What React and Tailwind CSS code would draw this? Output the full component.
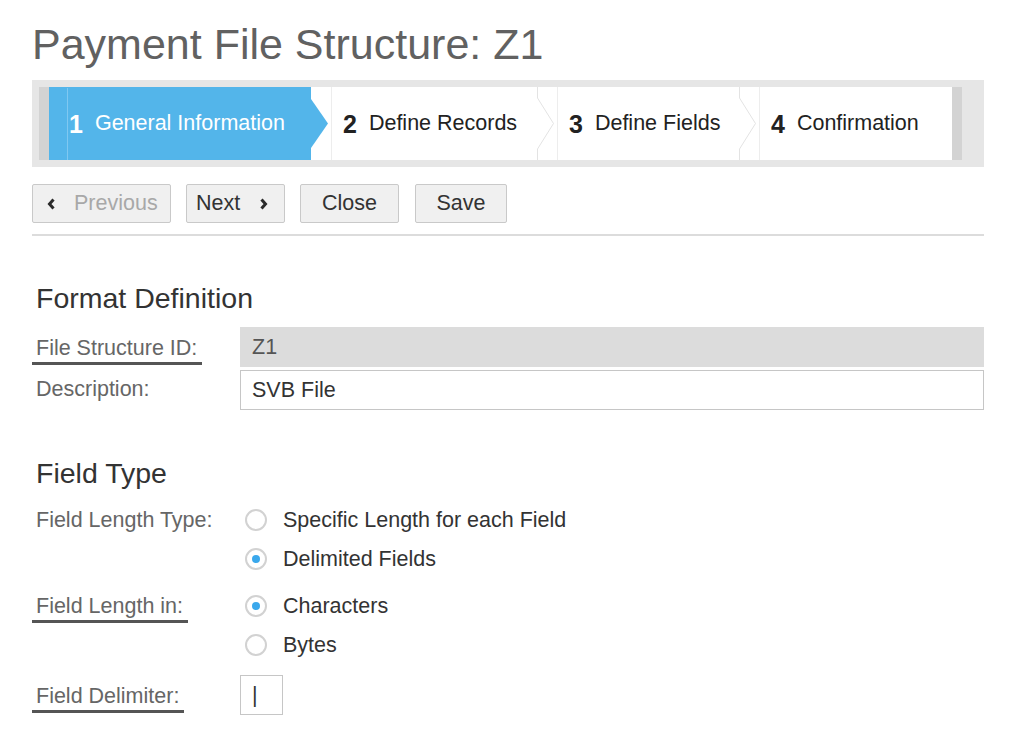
import React from "react";

function ChevronLeft() {
  return (
    <svg width="9" height="12" viewBox="0 0 9 12" className="shrink-0">
      <polyline points="6.5,1.5 2.5,6 6.5,10.5" fill="none" stroke="#2a2a2a" strokeWidth="3" strokeLinejoin="miter" />
    </svg>
  );
}

function ChevronRight() {
  return (
    <svg width="9" height="12" viewBox="0 0 9 12" className="shrink-0">
      <polyline points="2.5,1.5 6.5,6 2.5,10.5" fill="none" stroke="#2a2a2a" strokeWidth="3" strokeLinejoin="miter" />
    </svg>
  );
}

function Sep() {
  return (
    <svg width="21" height="73" viewBox="0 0 21 73" className="shrink-0">
      <polyline points="0.5,0 0.5,11 16.5,36.5 0.5,62 0.5,73" fill="none" stroke="#e3e3e3" strokeWidth="1" />
      <line x1="20.5" y1="0" x2="20.5" y2="73" stroke="#ededed" strokeWidth="1" />
    </svg>
  );
}

function Step({ n, label, className }) {
  return (
    <div className={"flex h-full items-center pl-[11px] pt-px text-[#222] " + className}>
      <span className="text-[25px] font-bold leading-none">{n}</span>
      <span className="ml-[12px] text-[21.5px] leading-none">{label}</span>
    </div>
  );
}

function Label({ children, underline }) {
  if (underline) {
    return (
      <span className="mt-[6px] inline-block border-b-[3px] border-[#555] pb-[2px] pl-[4px] pr-[5px] text-[21.5px] leading-[24px] text-[#666]">
        {children}
      </span>
    );
  }
  return <span className="inline-block pl-[4px] text-[21.5px] leading-[24px] text-[#666]">{children}</span>;
}

function Radio({ checked, label }) {
  return (
    <div className="flex h-[39px] items-center">
      <span className="ml-[5px] flex h-[22px] w-[22px] shrink-0 items-center justify-center rounded-full border-2 border-[#d2d2d2] bg-white">
        {checked && <span className="h-[8px] w-[8px] rounded-full bg-[#3aa8ec]" />}
      </span>
      <span className="ml-[16px] text-[21.5px] leading-[24px] text-[#333]">{label}</span>
    </div>
  );
}

export default function App() {
  return (
    <div className="min-h-[755px] bg-white pl-[32px] pt-[23px] font-['Liberation_Sans',Arial,sans-serif]">
      <div className="w-[952px]">
        <h1 className="whitespace-nowrap text-[43px] font-normal leading-[43px] text-[#616161]">
          Payment File Structure: Z1
        </h1>

        {/* Wizard */}
        <div className="mt-[14px] h-[87px] bg-[#e6e6e6] py-[7px] pl-[7px] pr-[22px]">
          <div className="flex h-[73px] bg-white">
            <div className="w-[10px] shrink-0 bg-[#d3d3d3]" />
            <div className="flex h-full w-[262px] shrink-0 items-center bg-[#53b5ea] pt-px text-white">
              <div className="ml-[18px] h-full w-px bg-[#7fc8f1]" />
              <span className="ml-px text-[25px] font-bold leading-none">1</span>
              <span className="ml-[12px] text-[21.5px] leading-none">General Information</span>
            </div>
            <svg width="21" height="73" viewBox="0 0 21 73" className="shrink-0">
              <polygon points="0,12 17,36.5 0,61" fill="#53b5ea" />
              <line x1="20.5" y1="0" x2="20.5" y2="73" stroke="#ededed" strokeWidth="1" />
            </svg>
            <Step n="2" label="Define Records" className="w-[205px] shrink-0" />
            <Sep />
            <Step n="3" label="Define Fields" className="w-[181px] shrink-0" />
            <Sep />
            <Step n="4" label="Confirmation" className="flex-1" />
            <div className="w-[10px] shrink-0 bg-[#d3d3d3]" />
          </div>
        </div>

        {/* Buttons */}
        <div className="mt-[17px] flex gap-[15px] text-[21.5px] leading-none">
          <button className="flex h-[39px] w-[139px] items-center rounded-[2px] border border-[#c9c9c9] bg-[#f0f0f0] pl-[14px] text-[#a8a8a8]">
            <ChevronLeft />
            <span className="ml-[18px]">Previous</span>
          </button>
          <button className="flex h-[39px] w-[99px] items-center rounded-[2px] border border-[#c9c9c9] bg-[#f0f0f0] pl-[9px] text-[#333]">
            <span>Next</span>
            <span className="ml-[19px]">
              <ChevronRight />
            </span>
          </button>
          <button className="flex h-[39px] w-[99px] items-center justify-center rounded-[2px] border border-[#c9c9c9] bg-[#f0f0f0] text-[#333]">
            Close
          </button>
          <button className="ml-px flex h-[39px] w-[92px] items-center justify-center rounded-[2px] border border-[#c9c9c9] bg-[#f0f0f0] text-[#333]">
            Save
          </button>
        </div>

        <div className="mt-[11px] h-[2px] bg-[#dcdcdc]" />

        {/* Format Definition */}
        <h2 className="mt-[45px] pl-[4px] text-[28.5px] font-normal leading-[34px] text-[#333]">Format Definition</h2>

        <div className="mt-[12px] flex h-[40px] items-center">
          <div className="w-[208px] shrink-0">
            <Label underline>File Structure ID:</Label>
          </div>
          <div className="flex h-full flex-1 items-center bg-[#dcdcdc] pl-[12px] text-[21.5px] text-[#555]">Z1</div>
        </div>
        <div className="mt-[3px] flex h-[40px] items-center">
          <div className="w-[208px] shrink-0">
            <Label>Description:</Label>
          </div>
          <div className="flex h-full flex-1 items-center border border-[#c6c6c6] bg-white pl-[11px] text-[21.5px] text-[#333]">
            SVB File
          </div>
        </div>

        {/* Field Type */}
        <h2 className="mt-[46px] pl-[4px] text-[28.5px] font-normal leading-[34px] text-[#333]">Field Type</h2>

        <div className="mt-[10px] flex">
          <div className="flex h-[39px] w-[208px] shrink-0 items-center">
            <Label>Field Length Type:</Label>
          </div>
          <div className="flex flex-col">
            <Radio label="Specific Length for each Field" />
            <Radio checked label="Delimited Fields" />
          </div>
        </div>

        <div className="mt-[8px] flex">
          <div className="flex h-[39px] w-[208px] shrink-0 items-center">
            <Label underline>Field Length in:</Label>
          </div>
          <div className="flex flex-col">
            <Radio checked label="Characters" />
            <Radio label="Bytes" />
          </div>
        </div>

        <div className="mt-[11px] flex h-[40px] items-center">
          <div className="w-[208px] shrink-0">
            <Label underline>Field Delimiter:</Label>
          </div>
          <div className="flex h-full w-[43px] items-center border border-[#c6c6c6] bg-white pl-[11px] text-[21.5px] text-[#333]">
            |
          </div>
        </div>
      </div>
    </div>
  );
}
